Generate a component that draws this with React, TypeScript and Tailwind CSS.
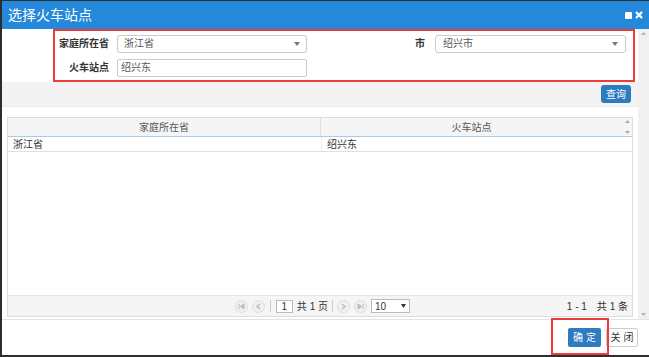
import React from 'react';

const font = { fontFamily: '"Liberation Sans", "Noto Sans CJK SC", sans-serif' };

const Caret = () => (
  <svg width="6" height="4" viewBox="0 0 6 4" className="text-[#777]">
    <path d="M0 0 L6 0 L3 4 Z" fill="currentColor" />
  </svg>
);

const PagerBtn = ({ kind }: { kind: 'first' | 'prev' | 'next' | 'last' }) => (
  <span className="flex h-[13px] w-[13px] items-center justify-center rounded-full border border-[#ddd] bg-[#f0f0f0]">
    <svg width="7" height="7" viewBox="0 0 7 7" className="text-[#bbb]">
      {kind === 'first' && <path d="M1 1 V6 M6 1 L2.5 3.5 L6 6 Z" stroke="currentColor" fill="currentColor" strokeWidth="1" />}
      {kind === 'prev' && <path d="M5 1 L2 3.5 L5 6" stroke="currentColor" fill="none" strokeWidth="1.5" />}
      {kind === 'next' && <path d="M2 1 L5 3.5 L2 6" stroke="currentColor" fill="none" strokeWidth="1.5" />}
      {kind === 'last' && <path d="M6 1 V6 M1 1 L4.5 3.5 L1 6 Z" stroke="currentColor" fill="currentColor" strokeWidth="1" />}
    </svg>
  </span>
);

export default function App() {
  return (
    <div
      className="flex h-[357px] w-[649px] flex-col overflow-hidden border-t border-l-2 border-b-2 border-[#2d2d2d] bg-white"
      style={font}
    >
      {/* title bar */}
      <div className="flex h-[28px] shrink-0 items-center justify-between bg-[#2589db] pl-[6px] pr-[6px]">
        <span className="text-[14px] text-white">选择火车站点</span>
        <div className="flex items-center gap-[3px]">
          <span className="h-[7px] w-[7px] rounded-[1px] bg-white" />
          <svg width="8" height="8" viewBox="0 0 8 8">
            <path d="M1 1 L7 7 M7 1 L1 7" stroke="white" strokeWidth="2.2" />
          </svg>
        </div>
      </div>

      {/* body */}
      <div className="flex h-[291px] shrink-0 border-b border-[#e2e2e2]">
        <div className="flex min-w-0 flex-1 flex-col">
          {/* search form */}
          <div className="pl-[51px] pr-[3px]">
            <div className="flex h-[53px] flex-col justify-center gap-[6px] border-2 border-[#ee3b3b] pl-[4px] pr-[7px]">
              <div className="flex items-center">
                <span className="w-[50px] text-right text-[10px] font-bold text-[#333]">家庭所在省</span>
                <div className="ml-[8px] flex h-[18px] w-[190px] items-center justify-between rounded-[3px] border border-[#ccc] px-[6px]">
                  <span className="text-[10px] text-[#555]">浙江省</span>
                  <Caret />
                </div>
                <span className="ml-auto w-[20px] text-right text-[10px] font-bold text-[#333]">市</span>
                <div className="ml-[10px] flex h-[18px] w-[191px] items-center justify-between rounded-[3px] border border-[#ccc] px-[7px]">
                  <span className="text-[10px] text-[#555]">绍兴市</span>
                  <Caret />
                </div>
              </div>
              <div className="flex items-center">
                <span className="w-[50px] text-right text-[10px] font-bold text-[#333]">火车站点</span>
                <div className="ml-[8px] flex h-[18px] w-[190px] items-center rounded-[2px] border border-[#ccc] px-[3px]">
                  <span className="text-[10px] text-[#555]">绍兴东</span>
                </div>
              </div>
            </div>
          </div>

          {/* toolbar */}
          <div className="flex h-[25px] shrink-0 items-center justify-end border-b border-[#e8e8e8] bg-[#f3f3f3] pr-[7px]">
            <button className="h-[18px] w-[30px] rounded-[3px] bg-[#2e7cc0] text-[10px] text-white">查询</button>
          </div>

          {/* grid */}
          <div className="px-[5px] pt-[10px]">
            <div className="flex h-[200px] flex-col border border-[#dddddd]">
              <div className="flex h-[19px] shrink-0 border-b border-[#a9cbe6] bg-[#f5f5f5] text-[10px] text-[#555]">
                <div className="flex w-[313px] items-center justify-center border-r border-[#dddddd]">家庭所在省</div>
                <div className="flex flex-1 items-center justify-center">火车站点</div>
                <div className="flex w-[10px] flex-col items-center justify-between py-[2px] text-[#aaa]">
                  <svg width="5" height="3" viewBox="0 0 5 3"><path d="M0 3 L2.5 0 L5 3 Z" fill="currentColor" /></svg>
                  <svg width="5" height="3" viewBox="0 0 5 3"><path d="M0 0 L2.5 3 L5 0 Z" fill="currentColor" /></svg>
                </div>
              </div>
              <div className="flex h-[15px] shrink-0 border-b border-[#e0e0e0] pr-[10px] text-[10px] text-[#333]">
                <div className="flex w-[313px] items-center pl-[5px]">浙江省</div>
                <div className="flex flex-1 items-center border-l border-[#eee] pl-[5px]">绍兴东</div>
              </div>
              <div className="flex-1" />
              <div className="flex h-[21px] shrink-0 items-center border-t border-[#e5e5e5] bg-[#f5f5f5] pr-[3px] text-[10px] text-[#333]">
                <div className="flex flex-1 items-center justify-center gap-[4px] pl-[70px]">
                  <PagerBtn kind="first" />
                  <PagerBtn kind="prev" />
                  <span className="mx-[1px] h-[12px] w-px bg-[#ccc]" />
                  <span className="flex h-[13px] w-[17px] items-center justify-center border border-[#bbb] bg-white">1</span>
                  <span>共 1 页</span>
                  <span className="h-[12px] w-px bg-[#ccc]" />
                  <PagerBtn kind="next" />
                  <PagerBtn kind="last" />
                  <span className="flex h-[14px] w-[39px] items-center justify-between border border-[#bbb] bg-white px-[3px]">
                    <span>10</span>
                    <svg width="5" height="4" viewBox="0 0 5 4"><path d="M0 0 L5 0 L2.5 4 Z" fill="#333" /></svg>
                  </span>
                </div>
                <span className="pr-[1px]">1 - 1　共 1 条</span>
              </div>
            </div>
          </div>
        </div>

        {/* body scrollbar */}
        <div className="flex w-[11px] shrink-0 flex-col items-center justify-between bg-[#f1f1f1] py-[3px] text-[#b5b5b5]">
          <svg width="5" height="3" viewBox="0 0 5 3"><path d="M0 3 L2.5 0 L5 3 Z" fill="currentColor" /></svg>
          <svg width="5" height="3" viewBox="0 0 5 3"><path d="M0 0 L2.5 3 L5 0 Z" fill="currentColor" /></svg>
        </div>
      </div>

      {/* footer */}
      <div className="relative flex flex-1 items-center justify-end gap-[5px] pr-[11px]">
        <button className="h-[19px] w-[33px] rounded-[2px] bg-[#2e7cc0] text-[10px] text-white">确 定</button>
        <button className="h-[19px] w-[32px] rounded-[2px] border border-[#ccc] bg-white text-[10px] text-[#333]">关 闭</button>
        {/* highlight annotation */}
        <div className="pointer-events-none absolute -top-[2px] bottom-0 right-[40px] w-[58px] border-2 border-[#ee3b3b]" />
      </div>
    </div>
  );
}
